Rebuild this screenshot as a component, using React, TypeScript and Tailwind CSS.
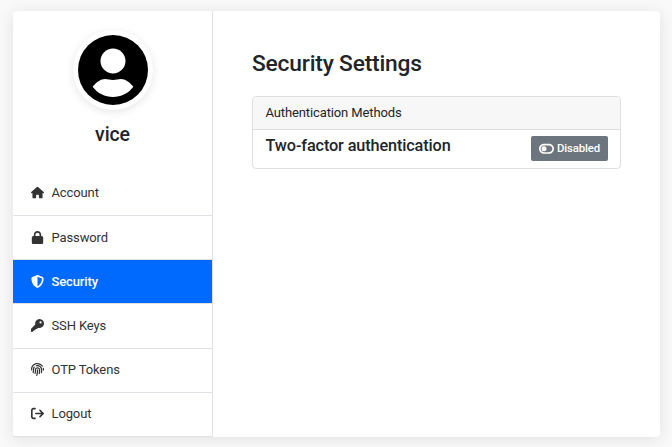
import { FaFingerprint } from "react-icons/fa";
import { FaHouse, FaLock, FaShieldHalved, FaArrowRightFromBracket, FaToggleOff } from "react-icons/fa6";

function KeyIcon({ className }: { className?: string }) {
  return (
    <svg viewBox="0 0 512 512" className={className} fill="currentColor">
      <path
        fillRule="evenodd"
        d="M336 0a176 176 0 1 1-56 343l-48 48h-56v56h-56l-42 50c-8 10-20 15-32 15H28c-16 0-28-12-28-28v-76c0-13 5-25 14-34l155-155A176 176 0 0 1 336 0ZM376 92a44 44 0 1 0 0 88a44 44 0 0 0 0-88Z"
      />
    </svg>
  );
}

const items = [
  { label: "Account", Icon: FaHouse, height: "h-[45px]" },
  { label: "Password", Icon: FaLock, height: "h-[44px]" },
  { label: "Security", Icon: FaShieldHalved, height: "h-[44px]", active: true },
  { label: "SSH Keys", Icon: KeyIcon, height: "h-[45px]" },
  { label: "OTP Tokens", Icon: FaFingerprint, height: "h-[44px] pb-[2px]" },
  { label: "Logout", Icon: FaArrowRightFromBracket, height: "h-[44px] pb-[2px]" },
];

export default function App() {
  return (
    <div className="h-[447px] overflow-hidden bg-[#f9f9f9] pt-[11px] pl-[13px] font-[Roboto,sans-serif] text-[#212529]">
      <div className="flex h-[426px] w-[647px] rounded-[4px] bg-white shadow-[0_2px_16px_rgba(0,0,0,0.1)]">
        <aside className="flex w-[200px] flex-col border-r border-[#dee2e6]">
          <div className="flex h-[160px] flex-col items-center pt-[19px]">
            <div className="flex size-[80px] items-center justify-center rounded-full bg-white shadow-[0_2px_8px_rgba(0,0,0,0.1)]">
              <svg viewBox="0 0 70 70" className="size-[70px]">
                <circle cx="35" cy="35" r="35" fill="#000" />
                <circle cx="35" cy="26" r="12.5" fill="#fff" />
                <path d="M14.6 51.8C18 47.2 23 44 27 44C30 44 31.5 45 35 45C38.5 45 40 44 43 44C47 44 52 47.2 55.4 51.8C50.3 58.5 43.2 62 35 62C26.8 62 19.7 58.5 14.6 51.8Z" fill="#fff" />
              </svg>
            </div>
            <h4 className="mt-[13px] text-[19.5px] leading-[23px] font-medium tracking-[-0.1px]">vice</h4>
          </div>
          <nav>
            {items.map(({ label, Icon, height, active }) => (
              <a
                key={label}
                className={`flex items-center border-b border-[#dee2e6] pl-[17px] text-[13px] tracking-[-0.12px] ${height} ${
                  active ? "bg-[#006aff] font-medium text-white" : "text-[#333]"
                }`}
              >
                <span className="mr-[7px] flex w-[14.5px] justify-center pb-px">
                  <Icon className="h-[13px] w-auto" />
                </span>
                {label}
              </a>
            ))}
          </nav>
        </aside>
        <main className="flex-1 pt-[39px] pr-[39px] pl-[39px]">
          <h3 className="text-[22.75px] leading-[27px] font-medium tracking-[-0.18px]">Security Settings</h3>
          <section className="mt-[19px] h-[73px] overflow-hidden rounded-[4px] border border-[#dfdfdf]">
            <div className="flex h-[33px] items-center border-b border-[#dfdfdf] bg-[#f7f7f7] pl-[12.5px] text-[13px] tracking-[-0.12px]">Authentication Methods</div>
            <div className="flex justify-between pt-[6px] pr-[12px] pl-[12.5px]">
              <h5 className="text-[16.25px] leading-[20px] font-medium tracking-[-0.12px]">Two-factor authentication</h5>
              <button className="flex h-[25px] w-[77px] items-center justify-center gap-[3px] rounded-[2px] bg-[#6c757d] text-[11.4px] font-medium tracking-[-0.12px] text-white">
                <FaToggleOff className="h-[13.5px] w-[15px] shrink-0" preserveAspectRatio="none" />
                <span className="pt-px">Disabled</span>
              </button>
            </div>
          </section>
        </main>
      </div>
    </div>
  );
}
